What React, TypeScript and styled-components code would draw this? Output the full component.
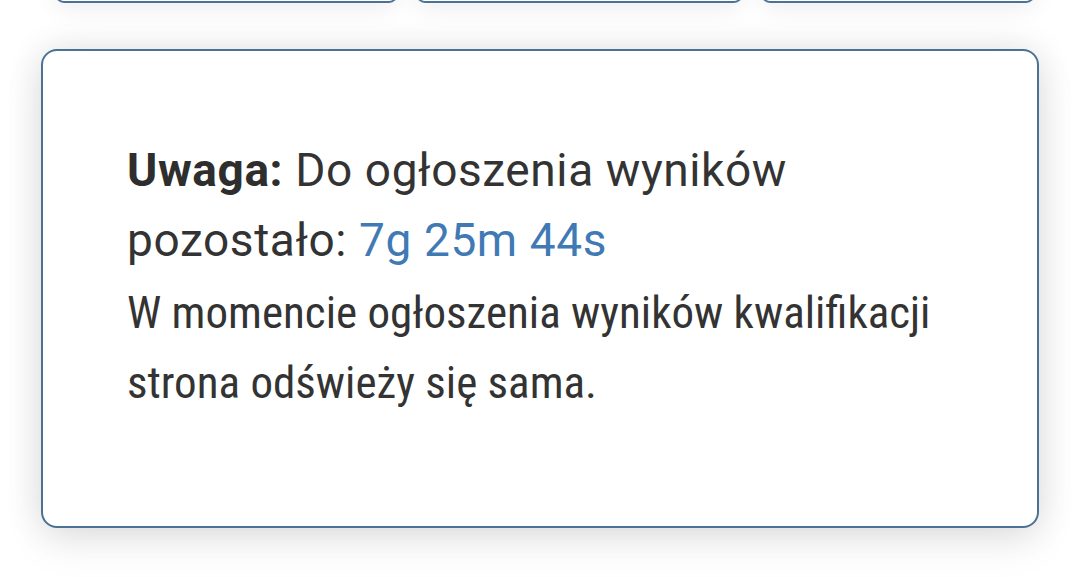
import React from 'react';
import styled, { createGlobalStyle } from 'styled-components';

const GlobalStyle = createGlobalStyle`
  html, body {
    margin: 0;
    padding: 0;
    background: #ffffff;
  }
  body {
    font-family: 'Roboto Condensed', 'Roboto', 'Liberation Sans', sans-serif;
    color: #333333;
  }
`;

const tabs = [343, 327, 274];

const App: React.FC = () => {
  return (
    <Page>
      <GlobalStyle />
      <TabRow>
        {tabs.map((w) => (
          <Tab key={w} $width={w} />
        ))}
      </TabRow>

      <NoticeCard>
        <Lead>
          <Strong>Uwaga:</Strong> Do ogłoszenia wyników pozostało:{' '}
          <Countdown>7g 25m 44s</Countdown>
        </Lead>
        <Info>W momencie ogłoszenia wyników kwalifikacji strona odświeży się sama.</Info>
      </NoticeCard>
    </Page>
  );
};

const Page = styled.div`
  width: 1080px;
  height: 577px;
  overflow: hidden;
  display: flex;
  flex-direction: column;
  box-sizing: border-box;
  padding: 0 41px;
`;

const TabRow = styled.div`
  display: flex;
  gap: 18px;
  padding-left: 14px;
  margin-top: -45px;
`;

const Tab = styled.div<{ $width: number }>`
  width: ${({ $width }) => $width}px;
  height: 48px;
  box-sizing: border-box;
  background: #ffffff;
  border: 2px solid #4b7295;
  border-radius: 9px;
  box-shadow: 0 6px 24px rgba(0, 0, 0, 0.07);
`;

const NoticeCard = styled.div`
  margin-top: 46px;
  width: 998px;
  height: 479px;
  box-sizing: border-box;
  background: #ffffff;
  border: 2px solid #4b7295;
  border-radius: 16px;
  box-shadow: 0 0 36px rgba(0, 0, 0, 0.11), 0 16px 44px rgba(0, 0, 0, 0.07);
  padding: 84px 84px 0 84px;
  display: flex;
  flex-direction: column;
  gap: 3px;
`;

const Lead = styled.p`
  margin: 0;
  font-family: 'Roboto', 'Liberation Sans', sans-serif;
  font-size: 46px;
  line-height: 70px;
  letter-spacing: 0.6px;
  font-weight: 400;
  color: #333333;
`;

const Strong = styled.strong`
  font-weight: 700;
  color: #2e2e2e;
`;

const Countdown = styled.span`
  color: #3f7ab5;
`;

const Info = styled.p`
  margin: 0;
  font-size: 45px;
  line-height: 70px;
  font-weight: 400;
  color: #333333;
`;

export default App;
